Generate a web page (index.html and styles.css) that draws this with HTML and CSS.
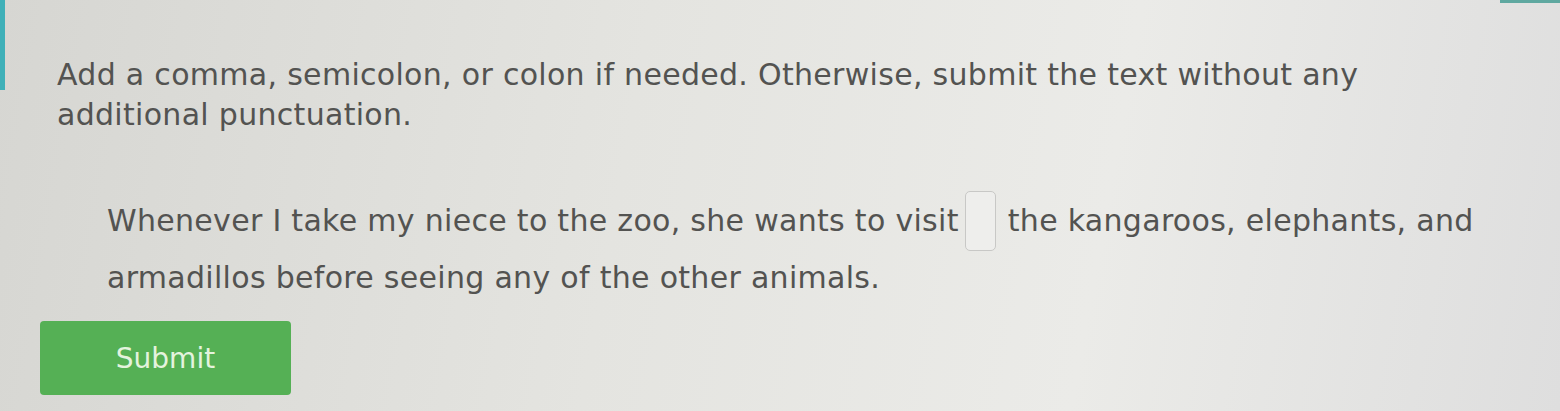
FILE: index.html
```html
<!DOCTYPE html>
<html>
<head>
<meta charset="utf-8">
<link rel="stylesheet" href="styles.css">
</head>
<body>
<div class="edge"></div>
<div class="edge-top"></div>
<main class="page">
  <p class="prompt">Add a comma, semicolon, or colon if needed. Otherwise, submit the text without any additional punctuation.</p>
  <p class="passage">Whenever I take my niece to the zoo, she wants to visit<span class="blank"></span>the kangaroos, elephants, and armadillos before seeing any of the other animals.</p>
  <button class="submit">Submit</button>
</main>
</body>
</html>
```
FILE: styles.css
```css
html, body {
  margin: 0;
  height: 100%;
}
body {
  width: 1560px;
  height: 411px;
  overflow: hidden;
  background: linear-gradient(100deg, #d6d6d2 0%, #e4e4e0 40%, #ebebe8 70%, #dedede 100%);
  font-family: "DejaVu Sans", Verdana, sans-serif;
  color: #535351;
  position: relative;
}
.edge {
  position: absolute;
  left: 0;
  top: 0;
  width: 5px;
  height: 90px;
  background: #3fb0b8;
}
.edge-top {
  position: absolute;
  right: 0;
  top: 0;
  width: 60px;
  height: 3px;
  background: #5fa8a0;
}
.page {
  padding: 55px 0 0 57px;
}
.prompt {
  margin: 0;
  width: 1360px;
  font-size: 30px;
  letter-spacing: 0.3px;
  line-height: 40px;
}
.passage {
  margin: 56px 0 0 50px;
  width: 1440px;
  font-size: 30px;
  letter-spacing: 0.3px;
  line-height: 54px;
}
.blank {
  display: inline-block;
  width: 31px;
  height: 60px;
  border: 1.5px solid #c8c8c6;
  border-radius: 5px;
  background: #eeeeec;
  vertical-align: -20px;
  margin: 0 12px 0 6px;
  box-sizing: border-box;
}
.submit {
  display: block;
  margin: 16px 0 0 -17px;
  width: 251px;
  height: 74px;
  border: none;
  border-radius: 4px;
  background: #55b055;
  color: #e4f3de;
  font-family: "DejaVu Sans", Verdana, sans-serif;
  font-size: 28px;
  padding: 0;
}
```
